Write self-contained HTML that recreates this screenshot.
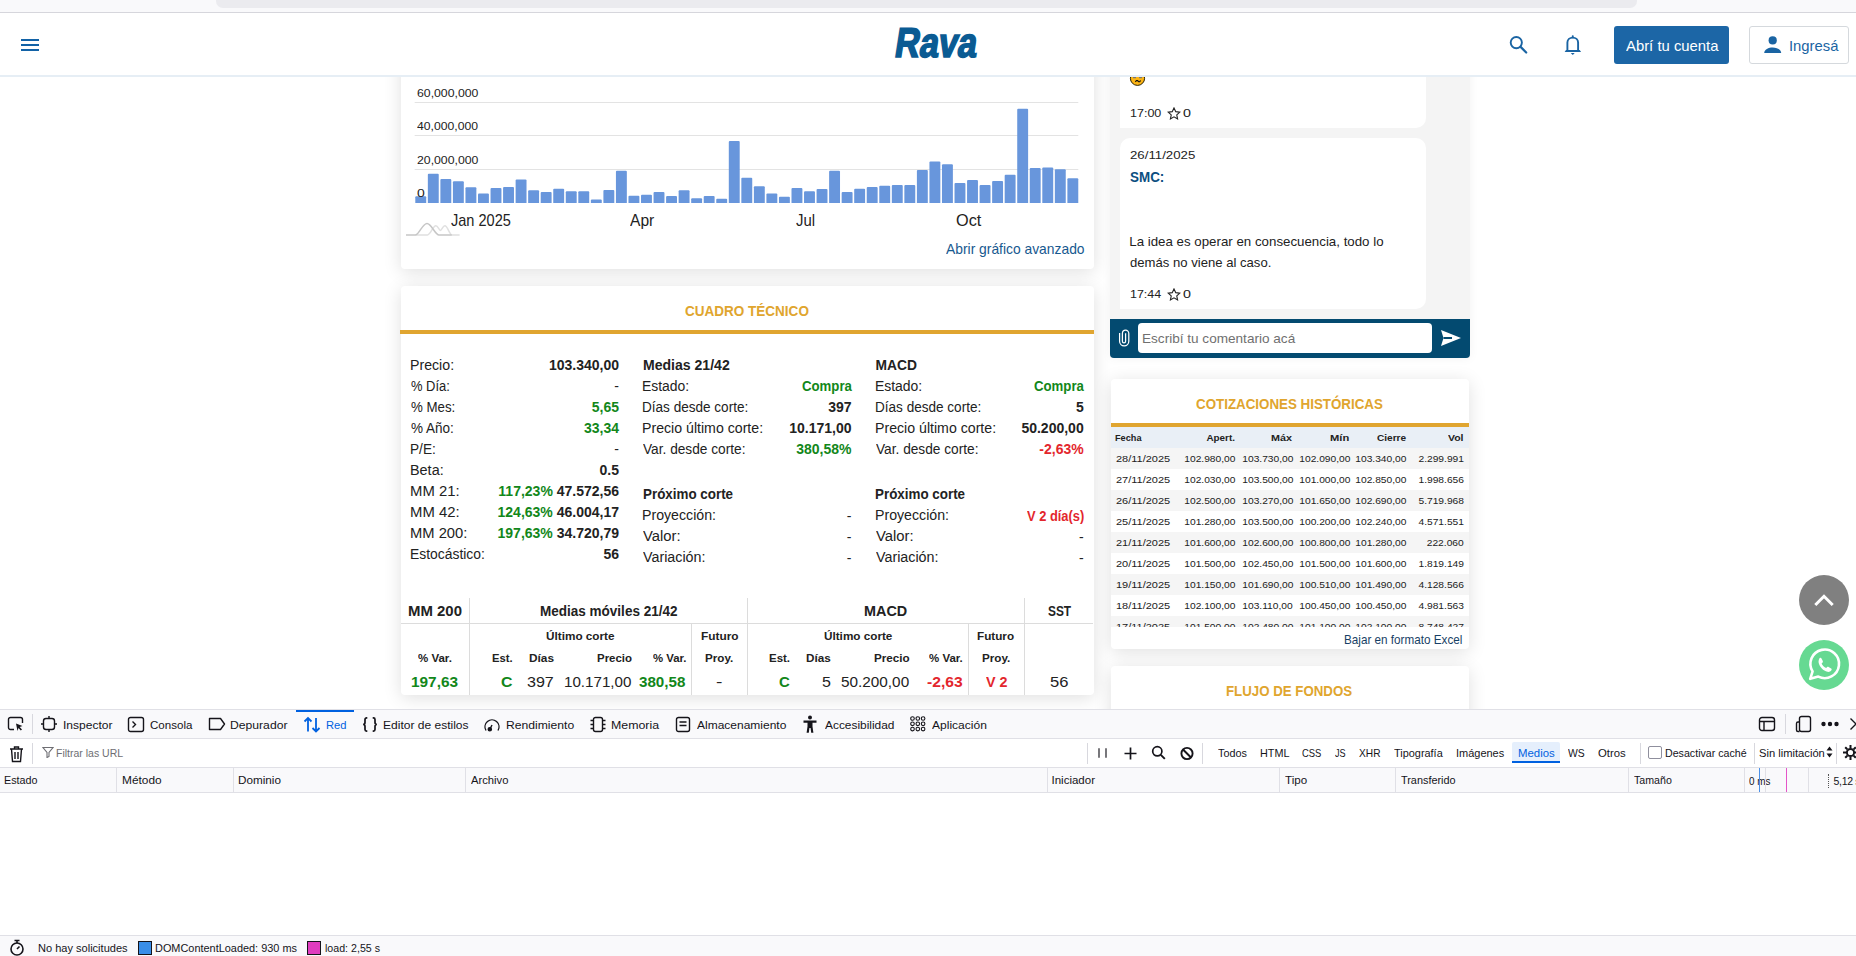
<!DOCTYPE html>
<html><head><meta charset="utf-8">
<style>
*{box-sizing:border-box;margin:0;padding:0}
html,body{width:1856px;height:956px;overflow:hidden;background:#fff;font-family:"Liberation Sans",sans-serif;color:#222}
.a{position:absolute;white-space:nowrap}
.r{text-align:right}
.c{text-align:center}
.b{font-weight:bold}
.g{color:#12871a}
.red{color:#e0282e}
#browser{position:absolute;left:0;top:0;width:1856px;height:13px;background:#f9f9fb;border-bottom:1px solid #d6d6dc}
#urlbar{position:absolute;left:216px;top:-6px;width:1421px;height:14px;background:#ebebef;border-radius:7px}
#hdr{position:absolute;left:0;top:13px;width:1856px;height:64px;background:#fff;border-bottom:2px solid #e6eef5;z-index:5}
.card{position:absolute;background:#fff;border-radius:4px;box-shadow:0 3px 18px rgba(0,0,0,0.125)}
.gold{color:#e0a22e}
#dev{position:absolute;left:0;top:709px;width:1856px;height:247px;background:#fff;border-top:1px solid #e0e0e6;font-size:12px;color:#15141a;z-index:10}
</style></head><body>
<div class="card" style="left:401px;top:-20px;width:693px;height:289px"></div>
<svg class="a" style="left:0;top:0" width="1100" height="280" viewBox="0 0 1100 280"><line x1="414.7" y1="102.5" x2="1078.3" y2="102.5" stroke="#e3e3e3" stroke-width="1"/><line x1="414.7" y1="135.5" x2="1078.3" y2="135.5" stroke="#e3e3e3" stroke-width="1"/><line x1="414.7" y1="169.5" x2="1078.3" y2="169.5" stroke="#e3e3e3" stroke-width="1"/><path d="M415.30 202.90 V197.14 Q415.30 196.14 416.30 196.14 H425.20 Q426.20 196.14 426.20 197.14 V202.90 Z" fill="#6896dc"/><path d="M427.84 202.90 V174.84 Q427.84 173.84 428.84 173.84 H437.74 Q438.74 173.84 438.74 174.84 V202.90 Z" fill="#6896dc"/><path d="M440.38 202.90 V179.99 Q440.38 178.99 441.38 178.99 H450.28 Q451.28 178.99 451.28 179.99 V202.90 Z" fill="#6896dc"/><path d="M452.92 202.90 V182.13 Q452.92 181.13 453.92 181.13 H462.82 Q463.82 181.13 463.82 182.13 V202.90 Z" fill="#6896dc"/><path d="M465.46 202.90 V188.14 Q465.46 187.14 466.46 187.14 H475.36 Q476.36 187.14 476.36 188.14 V202.90 Z" fill="#6896dc"/><path d="M478.00 202.90 V194.57 Q478.00 193.57 479.00 193.57 H487.90 Q488.90 193.57 488.90 194.57 V202.90 Z" fill="#6896dc"/><path d="M490.54 202.90 V188.99 Q490.54 187.99 491.54 187.99 H500.44 Q501.44 187.99 501.44 188.99 V202.90 Z" fill="#6896dc"/><path d="M503.08 202.90 V187.92 Q503.08 186.92 504.08 186.92 H512.98 Q513.98 186.92 513.98 187.92 V202.90 Z" fill="#6896dc"/><path d="M515.62 202.90 V180.42 Q515.62 179.42 516.62 179.42 H525.52 Q526.52 179.42 526.52 180.42 V202.90 Z" fill="#6896dc"/><path d="M528.16 202.90 V191.14 Q528.16 190.14 529.16 190.14 H538.06 Q539.06 190.14 539.06 191.14 V202.90 Z" fill="#6896dc"/><path d="M540.70 202.90 V193.07 Q540.70 192.07 541.70 192.07 H550.60 Q551.60 192.07 551.60 193.07 V202.90 Z" fill="#6896dc"/><path d="M553.24 202.90 V189.64 Q553.24 188.64 554.24 188.64 H563.14 Q564.14 188.64 564.14 189.64 V202.90 Z" fill="#6896dc"/><path d="M565.78 202.90 V192.21 Q565.78 191.21 566.78 191.21 H575.68 Q576.68 191.21 576.68 192.21 V202.90 Z" fill="#6896dc"/><path d="M578.32 202.90 V192.21 Q578.32 191.21 579.32 191.21 H588.22 Q589.22 191.21 589.22 192.21 V202.90 Z" fill="#6896dc"/><path d="M590.86 202.90 V200.57 Q590.86 199.57 591.86 199.57 H600.76 Q601.76 199.57 601.76 200.57 V202.90 Z" fill="#6896dc"/><path d="M603.40 202.90 V190.92 Q603.40 189.92 604.40 189.92 H613.30 Q614.30 189.92 614.30 190.92 V202.90 Z" fill="#6896dc"/><path d="M615.94 202.90 V171.84 Q615.94 170.84 616.94 170.84 H625.84 Q626.84 170.84 626.84 171.84 V202.90 Z" fill="#6896dc"/><path d="M628.48 202.90 V196.71 Q628.48 195.71 629.48 195.71 H638.38 Q639.38 195.71 639.38 196.71 V202.90 Z" fill="#6896dc"/><path d="M641.02 202.90 V195.64 Q641.02 194.64 642.02 194.64 H650.92 Q651.92 194.64 651.92 195.64 V202.90 Z" fill="#6896dc"/><path d="M653.56 202.90 V193.07 Q653.56 192.07 654.56 192.07 H663.46 Q664.46 192.07 664.46 193.07 V202.90 Z" fill="#6896dc"/><path d="M666.10 202.90 V196.93 Q666.10 195.93 667.10 195.93 H676.00 Q677.00 195.93 677.00 196.93 V202.90 Z" fill="#6896dc"/><path d="M678.64 202.90 V191.14 Q678.64 190.14 679.64 190.14 H688.54 Q689.54 190.14 689.54 191.14 V202.90 Z" fill="#6896dc"/><path d="M691.18 202.90 V199.28 Q691.18 198.28 692.18 198.28 H701.08 Q702.08 198.28 702.08 199.28 V202.90 Z" fill="#6896dc"/><path d="M703.72 202.90 V196.93 Q703.72 195.93 704.72 195.93 H713.62 Q714.62 195.93 714.62 196.93 V202.90 Z" fill="#6896dc"/><path d="M716.26 202.90 V199.71 Q716.26 198.71 717.26 198.71 H726.16 Q727.16 198.71 727.16 199.71 V202.90 Z" fill="#6896dc"/><path d="M728.80 202.90 V142.04 Q728.80 141.04 729.80 141.04 H738.70 Q739.70 141.04 739.70 142.04 V202.90 Z" fill="#6896dc"/><path d="M741.34 202.90 V178.70 Q741.34 177.70 742.34 177.70 H751.24 Q752.24 177.70 752.24 178.70 V202.90 Z" fill="#6896dc"/><path d="M753.88 202.90 V187.28 Q753.88 186.28 754.88 186.28 H763.78 Q764.78 186.28 764.78 187.28 V202.90 Z" fill="#6896dc"/><path d="M766.42 202.90 V194.57 Q766.42 193.57 767.42 193.57 H776.32 Q777.32 193.57 777.32 194.57 V202.90 Z" fill="#6896dc"/><path d="M778.96 202.90 V197.78 Q778.96 196.78 779.96 196.78 H788.86 Q789.86 196.78 789.86 197.78 V202.90 Z" fill="#6896dc"/><path d="M791.50 202.90 V188.99 Q791.50 187.99 792.50 187.99 H801.40 Q802.40 187.99 802.40 188.99 V202.90 Z" fill="#6896dc"/><path d="M804.04 202.90 V192.21 Q804.04 191.21 805.04 191.21 H813.94 Q814.94 191.21 814.94 192.21 V202.90 Z" fill="#6896dc"/><path d="M816.58 202.90 V190.07 Q816.58 189.07 817.58 189.07 H826.48 Q827.48 189.07 827.48 190.07 V202.90 Z" fill="#6896dc"/><path d="M829.12 202.90 V171.63 Q829.12 170.63 830.12 170.63 H839.02 Q840.02 170.63 840.02 171.63 V202.90 Z" fill="#6896dc"/><path d="M841.66 202.90 V193.07 Q841.66 192.07 842.66 192.07 H851.56 Q852.56 192.07 852.56 193.07 V202.90 Z" fill="#6896dc"/><path d="M854.20 202.90 V189.85 Q854.20 188.85 855.20 188.85 H864.10 Q865.10 188.85 865.10 189.85 V202.90 Z" fill="#6896dc"/><path d="M866.74 202.90 V187.92 Q866.74 186.92 867.74 186.92 H876.64 Q877.64 186.92 877.64 187.92 V202.90 Z" fill="#6896dc"/><path d="M879.28 202.90 V186.85 Q879.28 185.85 880.28 185.85 H889.18 Q890.18 185.85 890.18 186.85 V202.90 Z" fill="#6896dc"/><path d="M891.82 202.90 V185.99 Q891.82 184.99 892.82 184.99 H901.72 Q902.72 184.99 902.72 185.99 V202.90 Z" fill="#6896dc"/><path d="M904.36 202.90 V185.99 Q904.36 184.99 905.36 184.99 H914.26 Q915.26 184.99 915.26 185.99 V202.90 Z" fill="#6896dc"/><path d="M916.90 202.90 V170.98 Q916.90 169.98 917.90 169.98 H926.80 Q927.80 169.98 927.80 170.98 V202.90 Z" fill="#6896dc"/><path d="M929.44 202.90 V162.62 Q929.44 161.62 930.44 161.62 H939.34 Q940.34 161.62 940.34 162.62 V202.90 Z" fill="#6896dc"/><path d="M941.98 202.90 V165.19 Q941.98 164.19 942.98 164.19 H951.88 Q952.88 164.19 952.88 165.19 V202.90 Z" fill="#6896dc"/><path d="M954.52 202.90 V184.06 Q954.52 183.06 955.52 183.06 H964.42 Q965.42 183.06 965.42 184.06 V202.90 Z" fill="#6896dc"/><path d="M967.06 202.90 V181.06 Q967.06 180.06 968.06 180.06 H976.96 Q977.96 180.06 977.96 181.06 V202.90 Z" fill="#6896dc"/><path d="M979.60 202.90 V185.99 Q979.60 184.99 980.60 184.99 H989.50 Q990.50 184.99 990.50 185.99 V202.90 Z" fill="#6896dc"/><path d="M992.14 202.90 V181.92 Q992.14 180.92 993.14 180.92 H1002.04 Q1003.04 180.92 1003.04 181.92 V202.90 Z" fill="#6896dc"/><path d="M1004.68 202.90 V175.70 Q1004.68 174.70 1005.68 174.70 H1014.58 Q1015.58 174.70 1015.58 175.70 V202.90 Z" fill="#6896dc"/><path d="M1017.22 202.90 V109.66 Q1017.22 108.66 1018.22 108.66 H1027.12 Q1028.12 108.66 1028.12 109.66 V202.90 Z" fill="#6896dc"/><path d="M1029.76 202.90 V169.05 Q1029.76 168.05 1030.76 168.05 H1039.66 Q1040.66 168.05 1040.66 169.05 V202.90 Z" fill="#6896dc"/><path d="M1042.30 202.90 V168.62 Q1042.30 167.62 1043.30 167.62 H1052.20 Q1053.20 167.62 1053.20 168.62 V202.90 Z" fill="#6896dc"/><path d="M1054.84 202.90 V170.13 Q1054.84 169.13 1055.84 169.13 H1064.74 Q1065.74 169.13 1065.74 170.13 V202.90 Z" fill="#6896dc"/><path d="M1067.38 202.90 V179.13 Q1067.38 178.13 1068.38 178.13 H1077.28 Q1078.28 178.13 1078.28 179.13 V202.90 Z" fill="#6896dc"/><path d="M415.5 234.9 H427.5 C430.5 234.9 433 225.7 435.8 225.7 C438 225.7 439 230.4 440.4 230.4 C441.8 230.4 442.8 225.7 444.9 225.7 C447.5 225.7 449.5 234.9 452.1 234.9 H459.6" stroke="#e0e0e0" stroke-width="1.5" fill="none"/><path d="M406 234.9 H415.5 C419 234.9 422.5 223.4 427 223.4 C431.5 223.4 435 234.9 438.9 234.9 H451.7" stroke="#c6c6c6" stroke-width="1.5" fill="none"/></svg>
<div class="a" style="left:416.53px;top:86.78px;font:normal normal 11.4px/13.11px 'Liberation Sans',sans-serif;color:#222;transform:scaleX(1.0768);transform-origin:0 0;">60,000,000</div>
<div class="a" style="left:416.93px;top:119.98px;font:normal normal 11.4px/13.11px 'Liberation Sans',sans-serif;color:#222;transform:scaleX(1.0696);transform-origin:0 0;">40,000,000</div>
<div class="a" style="left:416.53px;top:153.68px;font:normal normal 11.4px/13.11px 'Liberation Sans',sans-serif;color:#222;transform:scaleX(1.0768);transform-origin:0 0;">20,000,000</div>
<div class="a" style="left:416.61px;top:186.92px;font:normal normal 10.8px/12.42px 'Liberation Sans',sans-serif;color:#222;transform:scaleX(1.2952);transform-origin:0 0;">0</div>
<div class="a" style="left:450.77px;top:211.80px;font:normal normal 15.9px/18.29px 'Liberation Sans',sans-serif;color:#222;transform:scaleX(0.9147);transform-origin:0 0;">Jan 2025</div>
<div class="a" style="left:629.70px;top:211.80px;font:normal normal 15.9px/18.29px 'Liberation Sans',sans-serif;color:#222;transform:scaleX(0.9796);transform-origin:0 0;">Apr</div>
<div class="a" style="left:795.97px;top:211.80px;font:normal normal 15.9px/18.29px 'Liberation Sans',sans-serif;color:#222;transform:scaleX(0.9368);transform-origin:0 0;">Jul</div>
<div class="a" style="left:956.43px;top:211.80px;font:normal normal 15.9px/18.29px 'Liberation Sans',sans-serif;color:#222;transform:scaleX(1.0220);transform-origin:0 0;">Oct</div>
<div class="a" style="left:946.00px;top:240.87px;font:normal normal 14.5px/16.67px 'Liberation Sans',sans-serif;color:#17598f;transform:scaleX(0.9550);transform-origin:0 0;">Abrir gráfico avanzado</div>
<div class="card" style="left:401px;top:286px;width:693px;height:409px"></div>
<div class="a" style="left:684.90px;top:303.04px;font:normal bold 14.2px/16.33px 'Liberation Sans',sans-serif;color:#e0a52e;transform:scaleX(0.9527);transform-origin:0 0;">CUADRO TÉCNICO</div>
<div class="a" style="left:400px;top:330px;width:694px;height:4px;background:#e0a530"></div>
<div class="a" style="left:410.05px;top:357.50px;font:normal normal 13.8px/15.87px 'Liberation Sans',sans-serif;color:#222;transform:scaleX(1.0265);transform-origin:0 0;">Precio:</div>
<div class="a" style="right:1237px;top:357.32px;font:bold 14px/16.1px 'Liberation Sans',sans-serif;color:#222;text-align:right;">103.340,00</div>
<div class="a" style="left:410.73px;top:378.50px;font:normal normal 13.8px/15.87px 'Liberation Sans',sans-serif;color:#222;transform:scaleX(0.9384);transform-origin:0 0;">% Día:</div>
<div class="a" style="right:1237px;top:378.32px;font:normal 14px/16.1px 'Liberation Sans',sans-serif;color:#222;text-align:right;">-</div>
<div class="a" style="left:410.72px;top:399.50px;font:normal normal 13.8px/15.87px 'Liberation Sans',sans-serif;color:#222;transform:scaleX(0.9627);transform-origin:0 0;">% Mes:</div>
<div class="a" style="right:1237px;top:399.32px;font:bold 14px/16.1px 'Liberation Sans',sans-serif;color:#12871a;text-align:right;">5,65</div>
<div class="a" style="left:410.71px;top:420.50px;font:normal normal 13.8px/15.87px 'Liberation Sans',sans-serif;color:#222;transform:scaleX(0.9786);transform-origin:0 0;">% Año:</div>
<div class="a" style="right:1237px;top:420.32px;font:bold 14px/16.1px 'Liberation Sans',sans-serif;color:#12871a;text-align:right;">33,34</div>
<div class="a" style="left:410.09px;top:441.50px;font:normal normal 13.8px/15.87px 'Liberation Sans',sans-serif;color:#222;transform:scaleX(0.9895);transform-origin:0 0;">P/E:</div>
<div class="a" style="right:1237px;top:441.32px;font:normal 14px/16.1px 'Liberation Sans',sans-serif;color:#222;text-align:right;">-</div>
<div class="a" style="left:410.03px;top:462.50px;font:normal normal 13.8px/15.87px 'Liberation Sans',sans-serif;color:#222;transform:scaleX(1.0444);transform-origin:0 0;">Beta:</div>
<div class="a" style="right:1237px;top:462.32px;font:bold 14px/16.1px 'Liberation Sans',sans-serif;color:#222;text-align:right;">0.5</div>
<div class="a" style="left:409.99px;top:483.50px;font:normal normal 13.8px/15.87px 'Liberation Sans',sans-serif;color:#222;transform:scaleX(1.0774);transform-origin:0 0;">MM 21:</div>
<div class="a" style="right:1237px;top:483.32px;font:bold 14px/16.1px 'Liberation Sans',sans-serif;color:#222;text-align:right;"><span style="color:#12871a">117,23%</span> 47.572,56</div>
<div class="a" style="left:409.99px;top:504.50px;font:normal normal 13.8px/15.87px 'Liberation Sans',sans-serif;color:#222;transform:scaleX(1.0774);transform-origin:0 0;">MM 42:</div>
<div class="a" style="right:1237px;top:504.32px;font:bold 14px/16.1px 'Liberation Sans',sans-serif;color:#222;text-align:right;"><span style="color:#12871a">124,63%</span> 46.004,17</div>
<div class="a" style="left:410.00px;top:525.50px;font:normal normal 13.8px/15.87px 'Liberation Sans',sans-serif;color:#222;transform:scaleX(1.0686);transform-origin:0 0;">MM 200:</div>
<div class="a" style="right:1237px;top:525.32px;font:bold 14px/16.1px 'Liberation Sans',sans-serif;color:#222;text-align:right;"><span style="color:#12871a">197,63%</span> 34.720,79</div>
<div class="a" style="left:410.07px;top:546.50px;font:normal normal 13.8px/15.87px 'Liberation Sans',sans-serif;color:#222;transform:scaleX(1.0069);transform-origin:0 0;">Estocástico:</div>
<div class="a" style="right:1237px;top:546.32px;font:bold 14px/16.1px 'Liberation Sans',sans-serif;color:#222;text-align:right;">56</div>
<div class="a" style="left:642.71px;top:357.50px;font:normal bold 13.8px/15.87px 'Liberation Sans',sans-serif;color:#222;transform:scaleX(1.0185);transform-origin:0 0;">Medias 21/42</div>
<div class="a" style="left:642.46px;top:378.50px;font:normal normal 13.8px/15.87px 'Liberation Sans',sans-serif;color:#222;transform:scaleX(1.0090);transform-origin:0 0;">Estado:</div>
<div class="a" style="left:801.51px;top:378.32px;font:normal bold 14px/16.1px 'Liberation Sans',sans-serif;color:#12871a;transform:scaleX(0.9432);transform-origin:0 0;">Compra</div>
<div class="a" style="left:642.49px;top:399.50px;font:normal normal 13.8px/15.87px 'Liberation Sans',sans-serif;color:#222;transform:scaleX(0.9823);transform-origin:0 0;">Días desde corte:</div>
<div class="a" style="right:1004.5px;top:399.32px;font:bold 14px/16.1px 'Liberation Sans',sans-serif;color:#222;text-align:right;">397</div>
<div class="a" style="left:642.45px;top:420.50px;font:normal normal 13.8px/15.87px 'Liberation Sans',sans-serif;color:#222;transform:scaleX(1.0255);transform-origin:0 0;">Precio último corte:</div>
<div class="a" style="right:1004.5px;top:420.32px;font:bold 14px/16.1px 'Liberation Sans',sans-serif;color:#222;text-align:right;">10.171,00</div>
<div class="a" style="left:643.48px;top:441.50px;font:normal normal 13.8px/15.87px 'Liberation Sans',sans-serif;color:#222;transform:scaleX(0.9922);transform-origin:0 0;">Var. desde corte:</div>
<div class="a" style="right:1004.5px;top:441.32px;font:bold 14px/16.1px 'Liberation Sans',sans-serif;color:#12871a;text-align:right;">380,58%</div>
<div class="a" style="left:642.75px;top:486.90px;font:normal bold 13.8px/15.87px 'Liberation Sans',sans-serif;color:#222;transform:scaleX(0.9707);transform-origin:0 0;">Próximo corte</div>
<div class="a" style="left:642.45px;top:508.00px;font:normal normal 13.8px/15.87px 'Liberation Sans',sans-serif;color:#222;transform:scaleX(1.0265);transform-origin:0 0;">Proyección:</div>
<div class="a" style="right:1004.5px;top:507.82px;font:normal 14px/16.1px 'Liberation Sans',sans-serif;color:#222;text-align:right;">-</div>
<div class="a" style="left:643.47px;top:529.00px;font:normal normal 13.8px/15.87px 'Liberation Sans',sans-serif;color:#222;transform:scaleX(1.0726);transform-origin:0 0;">Valor:</div>
<div class="a" style="right:1004.5px;top:528.82px;font:normal 14px/16.1px 'Liberation Sans',sans-serif;color:#222;text-align:right;">-</div>
<div class="a" style="left:643.47px;top:550.00px;font:normal normal 13.8px/15.87px 'Liberation Sans',sans-serif;color:#222;transform:scaleX(1.0356);transform-origin:0 0;">Variación:</div>
<div class="a" style="right:1004.5px;top:549.82px;font:normal 14px/16.1px 'Liberation Sans',sans-serif;color:#222;text-align:right;">-</div>
<div class="a" style="left:875.6px;top:357.50px;font:bold 13.8px/15.87px 'Liberation Sans',sans-serif;color:#222;">MACD</div>
<div class="a" style="left:875.06px;top:378.50px;font:normal normal 13.8px/15.87px 'Liberation Sans',sans-serif;color:#222;transform:scaleX(1.0090);transform-origin:0 0;">Estado:</div>
<div class="a" style="left:1033.71px;top:378.32px;font:normal bold 14px/16.1px 'Liberation Sans',sans-serif;color:#12871a;transform:scaleX(0.9432);transform-origin:0 0;">Compra</div>
<div class="a" style="left:875.09px;top:399.50px;font:normal normal 13.8px/15.87px 'Liberation Sans',sans-serif;color:#222;transform:scaleX(0.9823);transform-origin:0 0;">Días desde corte:</div>
<div class="a" style="right:772.3px;top:399.32px;font:bold 14px/16.1px 'Liberation Sans',sans-serif;color:#222;text-align:right;">5</div>
<div class="a" style="left:875.05px;top:420.50px;font:normal normal 13.8px/15.87px 'Liberation Sans',sans-serif;color:#222;transform:scaleX(1.0255);transform-origin:0 0;">Precio último corte:</div>
<div class="a" style="right:772.3px;top:420.32px;font:bold 14px/16.1px 'Liberation Sans',sans-serif;color:#222;text-align:right;">50.200,00</div>
<div class="a" style="left:876.08px;top:441.50px;font:normal normal 13.8px/15.87px 'Liberation Sans',sans-serif;color:#222;transform:scaleX(0.9922);transform-origin:0 0;">Var. desde corte:</div>
<div class="a" style="right:772.3px;top:441.32px;font:bold 14px/16.1px 'Liberation Sans',sans-serif;color:#e3262d;text-align:right;">-2,63%</div>
<div class="a" style="left:875.35px;top:486.90px;font:normal bold 13.8px/15.87px 'Liberation Sans',sans-serif;color:#222;transform:scaleX(0.9707);transform-origin:0 0;">Próximo corte</div>
<div class="a" style="left:875.05px;top:508.00px;font:normal normal 13.8px/15.87px 'Liberation Sans',sans-serif;color:#222;transform:scaleX(1.0265);transform-origin:0 0;">Proyección:</div>
<div class="a" style="left:1027.09px;top:507.82px;font:normal bold 14px/16.1px 'Liberation Sans',sans-serif;color:#e3262d;transform:scaleX(0.9187);transform-origin:0 0;">V 2 día(s)</div>
<div class="a" style="left:876.07px;top:529.00px;font:normal normal 13.8px/15.87px 'Liberation Sans',sans-serif;color:#222;transform:scaleX(1.0726);transform-origin:0 0;">Valor:</div>
<div class="a" style="right:772.3px;top:528.82px;font:normal 14px/16.1px 'Liberation Sans',sans-serif;color:#222;text-align:right;">-</div>
<div class="a" style="left:876.07px;top:550.00px;font:normal normal 13.8px/15.87px 'Liberation Sans',sans-serif;color:#222;transform:scaleX(1.0356);transform-origin:0 0;">Variación:</div>
<div class="a" style="right:772.3px;top:549.82px;font:normal 14px/16.1px 'Liberation Sans',sans-serif;color:#222;text-align:right;">-</div>
<div class="a" style="left:469px;top:598px;width:1px;height:97px;background:#dcdcdc"></div>
<div class="a" style="left:747px;top:598px;width:1px;height:97px;background:#dcdcdc"></div>
<div class="a" style="left:1024px;top:598px;width:1px;height:97px;background:#dcdcdc"></div>
<div class="a" style="left:691px;top:623px;width:1px;height:72px;background:#dcdcdc"></div>
<div class="a" style="left:968px;top:623px;width:1px;height:72px;background:#dcdcdc"></div>
<div class="a" style="left:401px;top:623px;width:692px;height:1px;background:#dcdcdc"></div>
<div class="a" style="left:407.66px;top:603.32px;font:normal bold 13.9px/15.98px 'Liberation Sans',sans-serif;color:#222;transform:scaleX(1.0749);transform-origin:0 0;">MM 200</div>
<div class="a" style="left:539.65px;top:603.32px;font:normal bold 13.9px/15.98px 'Liberation Sans',sans-serif;color:#222;transform:scaleX(0.9730);transform-origin:0 0;">Medias móviles 21/42</div>
<div class="a" style="left:864.19px;top:603.32px;font:normal bold 13.9px/15.98px 'Liberation Sans',sans-serif;color:#222;transform:scaleX(1.0360);transform-origin:0 0;">MACD</div>
<div class="a" style="left:1047.68px;top:603.32px;font:normal bold 13.9px/15.98px 'Liberation Sans',sans-serif;color:#222;transform:scaleX(0.8566);transform-origin:0 0;">SST</div>
<div class="a" style="left:546.02px;top:630.02px;font:normal bold 10.8px/12.42px 'Liberation Sans',sans-serif;color:#222;transform:scaleX(1.0887);transform-origin:0 0;">Último corte</div>
<div class="a" style="left:700.57px;top:630.02px;font:normal bold 10.8px/12.42px 'Liberation Sans',sans-serif;color:#222;transform:scaleX(1.1000);transform-origin:0 0;">Futuro</div>
<div class="a" style="left:823.72px;top:630.02px;font:normal bold 10.8px/12.42px 'Liberation Sans',sans-serif;color:#222;transform:scaleX(1.0855);transform-origin:0 0;">Último corte</div>
<div class="a" style="left:977.39px;top:630.02px;font:normal bold 10.8px/12.42px 'Liberation Sans',sans-serif;color:#222;transform:scaleX(1.0848);transform-origin:0 0;">Futuro</div>
<div class="a" style="left:418.03px;top:651.82px;font:normal bold 10.8px/12.42px 'Liberation Sans',sans-serif;color:#222;transform:scaleX(1.0656);transform-origin:0 0;">% Var.</div>
<div class="a" style="left:491.62px;top:651.82px;font:normal bold 10.8px/12.42px 'Liberation Sans',sans-serif;color:#222;transform:scaleX(1.0411);transform-origin:0 0;">Est.</div>
<div class="a" style="left:528.58px;top:651.82px;font:normal bold 10.8px/12.42px 'Liberation Sans',sans-serif;color:#222;transform:scaleX(1.0977);transform-origin:0 0;">Días</div>
<div class="a" style="left:596.50px;top:651.82px;font:normal bold 10.8px/12.42px 'Liberation Sans',sans-serif;color:#222;transform:scaleX(1.0614);transform-origin:0 0;">Precio</div>
<div class="a" style="left:652.74px;top:651.82px;font:normal bold 10.8px/12.42px 'Liberation Sans',sans-serif;color:#222;transform:scaleX(1.0526);transform-origin:0 0;">% Var.</div>
<div class="a" style="left:705.49px;top:651.82px;font:normal bold 10.8px/12.42px 'Liberation Sans',sans-serif;color:#222;transform:scaleX(1.0788);transform-origin:0 0;">Proy.</div>
<div class="a" style="left:769.30px;top:651.82px;font:normal bold 10.8px/12.42px 'Liberation Sans',sans-serif;color:#222;transform:scaleX(1.0630);transform-origin:0 0;">Est.</div>
<div class="a" style="left:806.49px;top:651.82px;font:normal bold 10.8px/12.42px 'Liberation Sans',sans-serif;color:#222;transform:scaleX(1.0837);transform-origin:0 0;">Días</div>
<div class="a" style="left:873.59px;top:651.82px;font:normal bold 10.8px/12.42px 'Liberation Sans',sans-serif;color:#222;transform:scaleX(1.0803);transform-origin:0 0;">Precio</div>
<div class="a" style="left:929.43px;top:651.82px;font:normal bold 10.8px/12.42px 'Liberation Sans',sans-serif;color:#222;transform:scaleX(1.0623);transform-origin:0 0;">% Var.</div>
<div class="a" style="left:981.99px;top:651.82px;font:normal bold 10.8px/12.42px 'Liberation Sans',sans-serif;color:#222;transform:scaleX(1.0828);transform-origin:0 0;">Proy.</div>
<div class="a" style="left:411.40px;top:673.42px;font:normal bold 15px/17.25px 'Liberation Sans',sans-serif;color:#12871a;transform:scaleX(1.0254);transform-origin:0 0;">197,63</div>
<div class="a" style="left:500.64px;top:673.42px;font:normal bold 15px/17.25px 'Liberation Sans',sans-serif;color:#12871a;transform:scaleX(1.0564);transform-origin:0 0;">C</div>
<div class="a" style="left:526.73px;top:673.42px;font:normal normal 15px/17.25px 'Liberation Sans',sans-serif;color:#222;transform:scaleX(1.0709);transform-origin:0 0;">397</div>
<div class="a" style="left:564.16px;top:673.42px;font:normal normal 15px/17.25px 'Liberation Sans',sans-serif;color:#222;transform:scaleX(1.0108);transform-origin:0 0;">10.171,00</div>
<div class="a" style="left:639.42px;top:673.42px;font:normal bold 15px/17.25px 'Liberation Sans',sans-serif;color:#12871a;transform:scaleX(1.0111);transform-origin:0 0;">380,58</div>
<div class="a" style="left:716.20px;top:673.42px;font:normal normal 15px/17.25px 'Liberation Sans',sans-serif;color:#222;transform:scaleX(1.2800);transform-origin:0 0;">-</div>
<div class="a" style="left:779.18px;top:673.42px;font:normal bold 15px/17.25px 'Liberation Sans',sans-serif;color:#12871a;transform:scaleX(0.9949);transform-origin:0 0;">C</div>
<div class="a" style="left:822.33px;top:673.42px;font:normal normal 15px/17.25px 'Liberation Sans',sans-serif;color:#222;transform:scaleX(1.0667);transform-origin:0 0;">5</div>
<div class="a" style="left:841.16px;top:673.42px;font:normal normal 15px/17.25px 'Liberation Sans',sans-serif;color:#222;transform:scaleX(1.0214);transform-origin:0 0;">50.200,00</div>
<div class="a" style="left:927.45px;top:673.42px;font:normal bold 15px/17.25px 'Liberation Sans',sans-serif;color:#e3262d;transform:scaleX(1.0424);transform-origin:0 0;">-2,63</div>
<div class="a" style="left:985.78px;top:673.42px;font:normal bold 15px/17.25px 'Liberation Sans',sans-serif;color:#e3262d;transform:scaleX(0.9563);transform-origin:0 0;">V 2</div>
<div class="a" style="left:1050.01px;top:673.42px;font:normal normal 15px/17.25px 'Liberation Sans',sans-serif;color:#222;transform:scaleX(1.1032);transform-origin:0 0;">56</div>
<div class="a" style="left:1110px;top:0px;width:360px;height:358px;background:#f4f4f4;box-shadow:0 0 10px rgba(0,0,0,0.05)"></div>
<div class="a" style="left:1120px;top:-20px;width:306px;height:148px;background:#fff;border-radius:10px 10px 10px 0"></div>
<div class="a" style="left:1120px;top:138px;width:306px;height:170.5px;background:#fff;border-radius:10px 10px 10px 0"></div>
<svg class="a" style="left:1128px;top:69px" width="20" height="20" viewBox="1128 69 20 20"><circle cx="1137.5" cy="78.3" r="7.1" fill="#fcb414" stroke="#2a2000" stroke-width="1"/><rect x="1133" y="77" width="3" height="1.2" fill="#777"/><rect x="1139" y="77" width="3" height="1.2" fill="#777"/><path d="M1135.3 81.8 L1136.4 80.6 H1137.6 L1138.6 81.7 H1139.7 L1140.7 80.5" stroke="#111" stroke-width="1.1" fill="none"/></svg>
<div class="a" style="left:1129.54px;top:107.48px;font:normal normal 11.4px/13.11px 'Liberation Sans',sans-serif;color:#222;transform:scaleX(1.0986);transform-origin:0 0;">17:00</div>
<svg class="a" style="left:1166.5px;top:107.0px" width="14" height="13" viewBox="0 0 14 13"><path d="M7 0.9l1.75 3.75 4.05.45-3.05 2.75.85 4.05L7 9.85 3.4 11.9l.85-4.05L1.2 5.1l4.05-.45z" fill="none" stroke="#222" stroke-width="1.1" stroke-linejoin="miter"/></svg>
<div class="a" style="left:1182.53px;top:107.48px;font:normal normal 11.4px/13.11px 'Liberation Sans',sans-serif;color:#222;transform:scaleX(1.2545);transform-origin:0 0;">0</div>
<div class="a" style="left:1129.54px;top:288.48px;font:normal normal 11.4px/13.11px 'Liberation Sans',sans-serif;color:#222;transform:scaleX(1.0936);transform-origin:0 0;">17:44</div>
<svg class="a" style="left:1166.5px;top:288.0px" width="14" height="13" viewBox="0 0 14 13"><path d="M7 0.9l1.75 3.75 4.05.45-3.05 2.75.85 4.05L7 9.85 3.4 11.9l.85-4.05L1.2 5.1l4.05-.45z" fill="none" stroke="#222" stroke-width="1.1" stroke-linejoin="miter"/></svg>
<div class="a" style="left:1182.53px;top:288.48px;font:normal normal 11.4px/13.11px 'Liberation Sans',sans-serif;color:#222;transform:scaleX(1.2545);transform-origin:0 0;">0</div>
<div class="a" style="left:1129.51px;top:148.67px;font:normal normal 11.3px/12.99px 'Liberation Sans',sans-serif;color:#222;transform:scaleX(1.1716);transform-origin:0 0;">26/11/2025</div>
<div class="a" style="left:1130.14px;top:170.20px;font:normal bold 13.8px/15.87px 'Liberation Sans',sans-serif;color:#0b4e80;transform:scaleX(0.9731);transform-origin:0 0;">SMC:</div>
<div class="a" style="left:1129.27px;top:234.26px;font:normal normal 13.3px/15.29px 'Liberation Sans',sans-serif;color:#222;">La idea es operar en consecuencia, todo lo</div>
<div class="a" style="left:1129.91px;top:254.96px;font:normal normal 13.3px/15.29px 'Liberation Sans',sans-serif;color:#222;transform:scaleX(0.9855);transform-origin:0 0;">demás no viene al caso.</div>
<div class="a" style="left:1110px;top:319px;width:360px;height:39px;background:#034a70;border-radius:0 0 4px 4px"></div>
<div class="a" style="left:1138px;top:323px;width:294px;height:29.5px;background:#fff;border-radius:4px"></div>
<div class="a" style="left:1142.37px;top:330.58px;font:normal normal 13.5px/15.52px 'Liberation Sans',sans-serif;color:#707070;transform:scaleX(1.0058);transform-origin:0 0;">Escribí tu comentario acá</div>
<svg class="a" style="left:1108px;top:315px" width="40" height="45" viewBox="1108 315 40 45"><path d="M1119.6 333 V341.3 A4.6 4.6 0 0 0 1128.8 341.3 V333.4 A3.2 3.2 0 0 0 1122.4 333.4 V341.2 A1.6 1.6 0 0 0 1125.6 341.2 V333.2" fill="none" stroke="#fff" stroke-width="1.25"/></svg>
<svg class="a" style="left:1440px;top:329px" width="22" height="18" viewBox="0 0 22 18"><path d="M1 1 L21 9 L1 17 L3.5 9z" fill="#fff"/><path d="M3.5 9 H12" stroke="#034a70" stroke-width="2"/></svg>
<div class="card" style="left:1111px;top:379px;width:358px;height:270px"></div>
<div class="a" style="left:1196.11px;top:395.54px;font:normal bold 14.2px/16.33px 'Liberation Sans',sans-serif;color:#e0a52e;transform:scaleX(0.9406);transform-origin:0 0;">COTIZACIONES HISTÓRICAS</div>
<div class="a" style="left:1111px;top:423px;width:358px;height:4px;background:#e0a530"></div>
<div class="a" style="left:1111px;top:427px;width:358px;height:21px;background:#e9eff6"></div>
<div class="a" style="left:1115.42px;top:432.24px;font:normal bold 9.9px/11.38px 'Liberation Sans',sans-serif;color:#222;transform:scaleX(0.9280);transform-origin:0 0;">Fecha</div>
<div class="a" style="left:1206.45px;top:432.24px;font:normal bold 9.9px/11.38px 'Liberation Sans',sans-serif;color:#222;">Apert.</div>
<div class="a" style="left:1271.12px;top:432.24px;font:normal bold 9.9px/11.38px 'Liberation Sans',sans-serif;color:#222;transform:scaleX(1.0919);transform-origin:0 0;">Máx</div>
<div class="a" style="left:1330.49px;top:432.24px;font:normal bold 9.9px/11.38px 'Liberation Sans',sans-serif;color:#222;transform:scaleX(1.1302);transform-origin:0 0;">Mín</div>
<div class="a" style="left:1377.02px;top:432.24px;font:normal bold 9.9px/11.38px 'Liberation Sans',sans-serif;color:#222;transform:scaleX(1.0188);transform-origin:0 0;">Cierre</div>
<div class="a" style="left:1448.37px;top:432.24px;font:normal bold 9.9px/11.38px 'Liberation Sans',sans-serif;color:#222;transform:scaleX(1.0618);transform-origin:0 0;">Vol</div>
<div class="a" style="left:1111px;top:448px;width:358px;height:179px;overflow:hidden"><div style="position:absolute;left:0;top:0px;width:358px;height:21px;background:#f5f5f5"></div><div class="a" style="left:4.60px;top:4.83px;font:normal 9.9px/12px 'Liberation Sans',sans-serif;color:#222;transform:scaleX(1.113);transform-origin:0 0">28/11/2025</div><div class="a" style="right:233.60px;top:4.83px;font:normal 9.9px/12px 'Liberation Sans',sans-serif;color:#222;text-align:right;transform:scaleX(1.035);transform-origin:100% 0">102.980,00</div><div class="a" style="right:176.00px;top:4.83px;font:normal 9.9px/12px 'Liberation Sans',sans-serif;color:#222;text-align:right;transform:scaleX(1.035);transform-origin:100% 0">103.730,00</div><div class="a" style="right:119.00px;top:4.83px;font:normal 9.9px/12px 'Liberation Sans',sans-serif;color:#222;text-align:right;transform:scaleX(1.035);transform-origin:100% 0">102.090,00</div><div class="a" style="right:62.20px;top:4.83px;font:normal 9.9px/12px 'Liberation Sans',sans-serif;color:#222;text-align:right;transform:scaleX(1.035);transform-origin:100% 0">103.340,00</div><div class="a" style="right:4.90px;top:4.83px;font:normal 9.9px/12px 'Liberation Sans',sans-serif;color:#222;text-align:right;transform:scaleX(1.035);transform-origin:100% 0">2.299.991</div><div style="position:absolute;left:0;top:21px;width:358px;height:21px;background:#fff"></div><div class="a" style="left:4.60px;top:25.83px;font:normal 9.9px/12px 'Liberation Sans',sans-serif;color:#222;transform:scaleX(1.113);transform-origin:0 0">27/11/2025</div><div class="a" style="right:233.60px;top:25.83px;font:normal 9.9px/12px 'Liberation Sans',sans-serif;color:#222;text-align:right;transform:scaleX(1.035);transform-origin:100% 0">102.030,00</div><div class="a" style="right:176.00px;top:25.83px;font:normal 9.9px/12px 'Liberation Sans',sans-serif;color:#222;text-align:right;transform:scaleX(1.035);transform-origin:100% 0">103.500,00</div><div class="a" style="right:119.00px;top:25.83px;font:normal 9.9px/12px 'Liberation Sans',sans-serif;color:#222;text-align:right;transform:scaleX(1.035);transform-origin:100% 0">101.000,00</div><div class="a" style="right:62.20px;top:25.83px;font:normal 9.9px/12px 'Liberation Sans',sans-serif;color:#222;text-align:right;transform:scaleX(1.035);transform-origin:100% 0">102.850,00</div><div class="a" style="right:4.90px;top:25.83px;font:normal 9.9px/12px 'Liberation Sans',sans-serif;color:#222;text-align:right;transform:scaleX(1.035);transform-origin:100% 0">1.998.656</div><div style="position:absolute;left:0;top:42px;width:358px;height:21px;background:#f5f5f5"></div><div class="a" style="left:4.60px;top:46.83px;font:normal 9.9px/12px 'Liberation Sans',sans-serif;color:#222;transform:scaleX(1.113);transform-origin:0 0">26/11/2025</div><div class="a" style="right:233.60px;top:46.83px;font:normal 9.9px/12px 'Liberation Sans',sans-serif;color:#222;text-align:right;transform:scaleX(1.035);transform-origin:100% 0">102.500,00</div><div class="a" style="right:176.00px;top:46.83px;font:normal 9.9px/12px 'Liberation Sans',sans-serif;color:#222;text-align:right;transform:scaleX(1.035);transform-origin:100% 0">103.270,00</div><div class="a" style="right:119.00px;top:46.83px;font:normal 9.9px/12px 'Liberation Sans',sans-serif;color:#222;text-align:right;transform:scaleX(1.035);transform-origin:100% 0">101.650,00</div><div class="a" style="right:62.20px;top:46.83px;font:normal 9.9px/12px 'Liberation Sans',sans-serif;color:#222;text-align:right;transform:scaleX(1.035);transform-origin:100% 0">102.690,00</div><div class="a" style="right:4.90px;top:46.83px;font:normal 9.9px/12px 'Liberation Sans',sans-serif;color:#222;text-align:right;transform:scaleX(1.035);transform-origin:100% 0">5.719.968</div><div style="position:absolute;left:0;top:63px;width:358px;height:21px;background:#fff"></div><div class="a" style="left:4.60px;top:67.83px;font:normal 9.9px/12px 'Liberation Sans',sans-serif;color:#222;transform:scaleX(1.113);transform-origin:0 0">25/11/2025</div><div class="a" style="right:233.60px;top:67.83px;font:normal 9.9px/12px 'Liberation Sans',sans-serif;color:#222;text-align:right;transform:scaleX(1.035);transform-origin:100% 0">101.280,00</div><div class="a" style="right:176.00px;top:67.83px;font:normal 9.9px/12px 'Liberation Sans',sans-serif;color:#222;text-align:right;transform:scaleX(1.035);transform-origin:100% 0">103.500,00</div><div class="a" style="right:119.00px;top:67.83px;font:normal 9.9px/12px 'Liberation Sans',sans-serif;color:#222;text-align:right;transform:scaleX(1.035);transform-origin:100% 0">100.200,00</div><div class="a" style="right:62.20px;top:67.83px;font:normal 9.9px/12px 'Liberation Sans',sans-serif;color:#222;text-align:right;transform:scaleX(1.035);transform-origin:100% 0">102.240,00</div><div class="a" style="right:4.90px;top:67.83px;font:normal 9.9px/12px 'Liberation Sans',sans-serif;color:#222;text-align:right;transform:scaleX(1.035);transform-origin:100% 0">4.571.551</div><div style="position:absolute;left:0;top:84px;width:358px;height:21px;background:#f5f5f5"></div><div class="a" style="left:4.60px;top:88.83px;font:normal 9.9px/12px 'Liberation Sans',sans-serif;color:#222;transform:scaleX(1.113);transform-origin:0 0">21/11/2025</div><div class="a" style="right:233.60px;top:88.83px;font:normal 9.9px/12px 'Liberation Sans',sans-serif;color:#222;text-align:right;transform:scaleX(1.035);transform-origin:100% 0">101.600,00</div><div class="a" style="right:176.00px;top:88.83px;font:normal 9.9px/12px 'Liberation Sans',sans-serif;color:#222;text-align:right;transform:scaleX(1.035);transform-origin:100% 0">102.600,00</div><div class="a" style="right:119.00px;top:88.83px;font:normal 9.9px/12px 'Liberation Sans',sans-serif;color:#222;text-align:right;transform:scaleX(1.035);transform-origin:100% 0">100.800,00</div><div class="a" style="right:62.20px;top:88.83px;font:normal 9.9px/12px 'Liberation Sans',sans-serif;color:#222;text-align:right;transform:scaleX(1.035);transform-origin:100% 0">101.280,00</div><div class="a" style="right:4.90px;top:88.83px;font:normal 9.9px/12px 'Liberation Sans',sans-serif;color:#222;text-align:right;transform:scaleX(1.035);transform-origin:100% 0">222.060</div><div style="position:absolute;left:0;top:105px;width:358px;height:21px;background:#fff"></div><div class="a" style="left:4.60px;top:109.83px;font:normal 9.9px/12px 'Liberation Sans',sans-serif;color:#222;transform:scaleX(1.113);transform-origin:0 0">20/11/2025</div><div class="a" style="right:233.60px;top:109.83px;font:normal 9.9px/12px 'Liberation Sans',sans-serif;color:#222;text-align:right;transform:scaleX(1.035);transform-origin:100% 0">101.500,00</div><div class="a" style="right:176.00px;top:109.83px;font:normal 9.9px/12px 'Liberation Sans',sans-serif;color:#222;text-align:right;transform:scaleX(1.035);transform-origin:100% 0">102.450,00</div><div class="a" style="right:119.00px;top:109.83px;font:normal 9.9px/12px 'Liberation Sans',sans-serif;color:#222;text-align:right;transform:scaleX(1.035);transform-origin:100% 0">101.500,00</div><div class="a" style="right:62.20px;top:109.83px;font:normal 9.9px/12px 'Liberation Sans',sans-serif;color:#222;text-align:right;transform:scaleX(1.035);transform-origin:100% 0">101.600,00</div><div class="a" style="right:4.90px;top:109.83px;font:normal 9.9px/12px 'Liberation Sans',sans-serif;color:#222;text-align:right;transform:scaleX(1.035);transform-origin:100% 0">1.819.149</div><div style="position:absolute;left:0;top:126px;width:358px;height:21px;background:#f5f5f5"></div><div class="a" style="left:4.60px;top:130.83px;font:normal 9.9px/12px 'Liberation Sans',sans-serif;color:#222;transform:scaleX(1.113);transform-origin:0 0">19/11/2025</div><div class="a" style="right:233.60px;top:130.83px;font:normal 9.9px/12px 'Liberation Sans',sans-serif;color:#222;text-align:right;transform:scaleX(1.035);transform-origin:100% 0">101.150,00</div><div class="a" style="right:176.00px;top:130.83px;font:normal 9.9px/12px 'Liberation Sans',sans-serif;color:#222;text-align:right;transform:scaleX(1.035);transform-origin:100% 0">101.690,00</div><div class="a" style="right:119.00px;top:130.83px;font:normal 9.9px/12px 'Liberation Sans',sans-serif;color:#222;text-align:right;transform:scaleX(1.035);transform-origin:100% 0">100.510,00</div><div class="a" style="right:62.20px;top:130.83px;font:normal 9.9px/12px 'Liberation Sans',sans-serif;color:#222;text-align:right;transform:scaleX(1.035);transform-origin:100% 0">101.490,00</div><div class="a" style="right:4.90px;top:130.83px;font:normal 9.9px/12px 'Liberation Sans',sans-serif;color:#222;text-align:right;transform:scaleX(1.035);transform-origin:100% 0">4.128.566</div><div style="position:absolute;left:0;top:147px;width:358px;height:21px;background:#fff"></div><div class="a" style="left:4.60px;top:151.83px;font:normal 9.9px/12px 'Liberation Sans',sans-serif;color:#222;transform:scaleX(1.113);transform-origin:0 0">18/11/2025</div><div class="a" style="right:233.60px;top:151.83px;font:normal 9.9px/12px 'Liberation Sans',sans-serif;color:#222;text-align:right;transform:scaleX(1.035);transform-origin:100% 0">102.100,00</div><div class="a" style="right:176.00px;top:151.83px;font:normal 9.9px/12px 'Liberation Sans',sans-serif;color:#222;text-align:right;transform:scaleX(1.035);transform-origin:100% 0">103.110,00</div><div class="a" style="right:119.00px;top:151.83px;font:normal 9.9px/12px 'Liberation Sans',sans-serif;color:#222;text-align:right;transform:scaleX(1.035);transform-origin:100% 0">100.450,00</div><div class="a" style="right:62.20px;top:151.83px;font:normal 9.9px/12px 'Liberation Sans',sans-serif;color:#222;text-align:right;transform:scaleX(1.035);transform-origin:100% 0">100.450,00</div><div class="a" style="right:4.90px;top:151.83px;font:normal 9.9px/12px 'Liberation Sans',sans-serif;color:#222;text-align:right;transform:scaleX(1.035);transform-origin:100% 0">4.981.563</div><div style="position:absolute;left:0;top:168px;width:358px;height:21px;background:#f5f5f5"></div><div class="a" style="left:4.60px;top:172.83px;font:normal 9.9px/12px 'Liberation Sans',sans-serif;color:#222;transform:scaleX(1.113);transform-origin:0 0">17/11/2025</div><div class="a" style="right:233.60px;top:172.83px;font:normal 9.9px/12px 'Liberation Sans',sans-serif;color:#222;text-align:right;transform:scaleX(1.035);transform-origin:100% 0">101.500,00</div><div class="a" style="right:176.00px;top:172.83px;font:normal 9.9px/12px 'Liberation Sans',sans-serif;color:#222;text-align:right;transform:scaleX(1.035);transform-origin:100% 0">102.480,00</div><div class="a" style="right:119.00px;top:172.83px;font:normal 9.9px/12px 'Liberation Sans',sans-serif;color:#222;text-align:right;transform:scaleX(1.035);transform-origin:100% 0">101.100,00</div><div class="a" style="right:62.20px;top:172.83px;font:normal 9.9px/12px 'Liberation Sans',sans-serif;color:#222;text-align:right;transform:scaleX(1.035);transform-origin:100% 0">102.100,00</div><div class="a" style="right:4.90px;top:172.83px;font:normal 9.9px/12px 'Liberation Sans',sans-serif;color:#222;text-align:right;transform:scaleX(1.035);transform-origin:100% 0">8.748.427</div></div>
<div class="a" style="left:1344.46px;top:633.27px;font:normal normal 12.4px/14.26px 'Liberation Sans',sans-serif;color:#173f66;transform:scaleX(0.9441);transform-origin:0 0;">Bajar en formato Excel</div>
<div class="card" style="left:1111px;top:666px;width:358px;height:120px"></div>
<div class="a" style="left:1226.06px;top:683.14px;font:normal bold 14.2px/16.33px 'Liberation Sans',sans-serif;color:#e0a52e;transform:scaleX(0.9357);transform-origin:0 0;">FLUJO DE FONDOS</div>
<div class="a" style="left:1799px;top:575px;width:50px;height:50px;border-radius:50%;background:#808080"></div>
<svg class="a" style="left:1799px;top:575px" width="50" height="50" viewBox="0 0 50 50"><path d="M16.3 30 L25 21.3 L33.7 30" fill="none" stroke="#fff" stroke-width="3"/></svg>
<div class="a" style="left:1799px;top:640px;width:50px;height:50px;border-radius:50%;background:#66d992"></div>
<svg class="a" style="left:1799px;top:640px" width="50" height="50" viewBox="0 0 50 50"><path d="M11.2 38.8 L13.6 31.4 A14.3 14.3 0 1 1 19.3 36.6 Z" fill="none" stroke="#fff" stroke-width="2.6" stroke-linejoin="round"/><path d="M20.5 18.2c.7-.6 1.6-.5 2 .2l1.3 2.6c.3.6.1 1.2-.4 1.7l-.8.7c.9 2 2.6 3.8 4.6 4.7l.7-.8c.5-.5 1.2-.6 1.7-.3l2.5 1.4c.6.4.8 1.2.3 1.9-1 1.3-2.5 1.9-4 1.5-4.2-1.2-7.6-4.7-8.7-8.9-.4-1.5.1-3.3.8-4.7z" fill="#fff"/></svg>
<div id="browser"><div id="urlbar"></div></div>
<div id="hdr"></div>
<div class="a" style="left:0;top:13px;width:1856px;height:64px;z-index:6">
</div>
<svg class="a" style="left:20px;top:38px;z-index:7;" width="20" height="14" viewBox="0 0 20 14"><rect x="1" y="1" width="18" height="2" fill="#1262a6"/><rect x="1" y="6" width="18" height="2" fill="#1262a6"/><rect x="1" y="11" width="18" height="2" fill="#1262a6"/></svg>
<div class="a" style="left:892px;top:19.2px;font:bold 41.5px/48px 'Liberation Sans',sans-serif;color:#0a5b93;-webkit-text-stroke:1.7px #0a5b93;transform:matrix(0.825,0,-0.155,1,0,0);transform-origin:0 100%;letter-spacing:-0.05px;z-index:7;">Rava</div>
<svg class="a" style="left:1500px;top:28px;z-index:7;" width="90" height="34" viewBox="1500 28 90 34"><circle cx="1516.3" cy="42.6" r="5.6" fill="none" stroke="#1a64a3" stroke-width="1.9"/><path d="M1520.6 46.9 L1526.2 52.5" stroke="#1a64a3" stroke-width="2.2" stroke-linecap="round"/><path d="M1567.4 50.8 V42.6 C1567.4 39.6 1569.8 37.6 1572.75 37.6 C1575.7 37.6 1578.1 39.6 1578.1 42.6 V50.8" fill="none" stroke="#1a64a3" stroke-width="1.9"/><path d="M1564.6 52 L1566 50.1 H1579.7 L1581.1 52 Z" fill="#1a64a3"/><rect x="1571.8" y="35.2" width="1.9" height="3" rx="0.9" fill="#1a64a3"/><path d="M1570.8 53 H1574.7 L1572.75 55 Z" fill="#1a64a3"/></svg>
<div class="a" style="left:1614px;top:26px;width:115px;height:38px;background:#1c66a6;border-radius:3px;z-index:7;"></div>
<div class="a" style="left:1625.50px;top:37.02px;font:normal normal 15px/17.25px 'Liberation Sans',sans-serif;color:#fff;transform:scaleX(0.9906);transform-origin:0 0;z-index:8;">Abrí tu cuenta</div>
<div class="a" style="left:1749px;top:26px;width:100px;height:38px;background:#fff;border:1px solid #d5d9dd;border-radius:3px;z-index:7;"></div>
<svg class="a" style="left:1763px;top:36px;z-index:8" width="20" height="18" viewBox="0 0 20 18"><circle cx="9.7" cy="4.4" r="4.1" fill="#1a64a3"/><path d="M1.2 17.1c0-3.6 4.3-5.6 8.5-5.6s8.5 2 8.5 5.6z" fill="#1a64a3"/></svg>
<div class="a" style="left:1788.64px;top:37.02px;font:normal normal 15px/17.25px 'Liberation Sans',sans-serif;color:#1a64a3;transform:scaleX(0.9887);transform-origin:0 0;z-index:8;">Ingresá</div>
<div class="a" style="left:0;top:709px;width:1856px;height:247px;background:#fff">
<div class="a" style="left:0;top:0;width:1856px;height:1px;background:#e0e0e6"></div>
<div class="a" style="left:0;top:1px;width:1856px;height:29px;background:#f9f9fb;border-bottom:1px solid #e0e0e6"></div>
<div class="a" style="left:0;top:30px;width:1856px;height:29px;background:#fff;border-bottom:1px solid #e0e0e6"></div>
<div class="a" style="left:0;top:59px;width:1856px;height:25px;background:#f9f9fb;border-bottom:1px solid #e0e0e6"></div>
<div class="a" style="left:0;top:226px;width:1856px;height:21px;background:#f9f9fb;border-top:1px solid #e0e0e6"></div>
</div>
<svg class="a" style="left:7px;top:716px" width="18" height="16" viewBox="0 0 18 16" fill="none" stroke="#15141a" stroke-width="1.4"><path d="M7 13.5H3.5a2 2 0 0 1-2-2v-8a2 2 0 0 1 2-2h10a2 2 0 0 1 2 2V7"/><path d="M9 7.5l6.5 2.5-2.8 1 2.3 2.5-1.2 1.1-2.3-2.5-1 2.8z" fill="#15141a" stroke="none"/></svg>
<div class="a" style="left:32px;top:714px;width:1px;height:20px;background:#d8d8de"></div>
<svg class="a" style="left:40px;top:715px" width="18" height="18" viewBox="0 0 18 18" fill="none" stroke="#15141a" stroke-width="1.4"><rect x="3.5" y="3.5" width="11" height="11" rx="2.5"/><path d="M9 1v2.5M9 14.5V17M1 9h2.5M14.5 9H17"/></svg>
<div class="a" style="left:62.55px;top:718.79px;font:normal normal 11.5px/13.22px 'Liberation Sans',sans-serif;color:#15141a;transform:scaleX(1.0472);transform-origin:0 0;">Inspector</div>
<svg class="a" style="left:127px;top:716px" width="18" height="17" viewBox="0 0 18 17" fill="none" stroke="#15141a" stroke-width="1.4"><rect x="1.5" y="1.5" width="15" height="14" rx="2"/><path d="M5.5 5.5l3 3-3 3"/></svg>
<div class="a" style="left:149.97px;top:718.79px;font:normal normal 11.5px/13.22px 'Liberation Sans',sans-serif;color:#15141a;transform:scaleX(1.0048);transform-origin:0 0;">Consola</div>
<svg class="a" style="left:208px;top:717px" width="18" height="14" viewBox="0 0 18 14" fill="none" stroke="#15141a" stroke-width="1.4"><path d="M1.5 1.5h11l4 5.5-4 5.5h-11z" stroke-linejoin="round"/></svg>
<div class="a" style="left:230.17px;top:718.79px;font:normal normal 11.5px/13.22px 'Liberation Sans',sans-serif;color:#15141a;transform:scaleX(1.0573);transform-origin:0 0;">Depurador</div>
<div class="a" style="left:296px;top:710px;width:58px;height:2px;background:#0061e0"></div>
<svg class="a" style="left:303px;top:716px" width="18" height="17" viewBox="0 0 18 17" fill="none" stroke="#0061e0" stroke-width="1.8"><path d="M5 15.5V2M1.5 5.5L5 2l3.5 3.5M13 2v13.5M9.5 12l3.5 3.5 3.5-3.5"/></svg>
<div class="a" style="left:325.65px;top:718.79px;font:normal normal 11.5px/13.22px 'Liberation Sans',sans-serif;color:#0061e0;transform:scaleX(0.9692);transform-origin:0 0;">Red</div>
<svg class="a" style="left:361px;top:716px" width="18" height="17" viewBox="0 0 18 17" fill="none" stroke="#15141a" stroke-width="1.4"><path d="M6.3 1.8H5.6a1.6 1.6 0 0 0-1.6 1.6v3.2c0 1-.8 1.9-1.9 1.9 1.1 0 1.9.9 1.9 1.9v3.2a1.6 1.6 0 0 0 1.6 1.6h.7M11.7 1.8h.7a1.6 1.6 0 0 1 1.6 1.6v3.2c0 1 .8 1.9 1.9 1.9-1.1 0-1.9.9-1.9 1.9v3.2a1.6 1.6 0 0 1-1.6 1.6h-.7" stroke-width="1.7"/></svg>
<div class="a" style="left:382.99px;top:718.79px;font:normal normal 11.5px/13.22px 'Liberation Sans',sans-serif;color:#15141a;transform:scaleX(1.0456);transform-origin:0 0;">Editor de estilos</div>
<svg class="a" style="left:483px;top:716px" width="18" height="17" viewBox="0 0 18 17" fill="none" stroke="#15141a" stroke-width="1.4"><path d="M3 14.5a7 7 0 1 1 12 0"/><path d="M9 9l-2 4" /><circle cx="6.8" cy="13.3" r="1.6" fill="#15141a"/></svg>
<div class="a" style="left:505.68px;top:718.79px;font:normal normal 11.5px/13.22px 'Liberation Sans',sans-serif;color:#15141a;transform:scaleX(1.0566);transform-origin:0 0;">Rendimiento</div>
<svg class="a" style="left:589px;top:716px" width="18" height="17" viewBox="0 0 18 17" fill="none" stroke="#15141a" stroke-width="1.4"><rect x="4.5" y="1.5" width="9" height="14" rx="2"/><path d="M1.5 4.5h3M1.5 8.5h3M1.5 12.5h3M13.5 4.5h3M13.5 8.5h3M13.5 12.5h3"/></svg>
<div class="a" style="left:611.26px;top:718.79px;font:normal normal 11.5px/13.22px 'Liberation Sans',sans-serif;color:#15141a;transform:scaleX(1.0735);transform-origin:0 0;">Memoria</div>
<svg class="a" style="left:675px;top:716px" width="16" height="17" viewBox="0 0 16 17" fill="none" stroke="#15141a" stroke-width="1.4"><rect x="1.5" y="1.5" width="13" height="14" rx="2"/><path d="M4.5 6h7M4.5 9.5h7"/></svg>
<div class="a" style="left:697.40px;top:718.79px;font:normal normal 11.5px/13.22px 'Liberation Sans',sans-serif;color:#15141a;transform:scaleX(1.0432);transform-origin:0 0;">Almacenamiento</div>
<svg class="a" style="left:802px;top:715px" width="16" height="18" viewBox="0 0 16 18" fill="none" stroke="#15141a" stroke-width="1.4"><circle cx="8" cy="2.6" r="2" fill="#15141a" stroke="none"/><path d="M1.5 5.6h13v2.2h-4v3.6l.9 6.3H9.2L8.6 13h-1.2l-.6 4.7H4.6l.9-6.3V7.8h-4z" fill="#15141a" stroke="none"/></svg>
<div class="a" style="left:824.60px;top:718.79px;font:normal normal 11.5px/13.22px 'Liberation Sans',sans-serif;color:#15141a;transform:scaleX(1.0350);transform-origin:0 0;">Accesibilidad</div>
<svg class="a" style="left:910px;top:716px" width="16" height="16" viewBox="0 0 16 16" fill="none" stroke="#15141a" stroke-width="1.4"><circle cx="2.5" cy="2.5" r="1.8" stroke-width="1.1"/><circle cx="2.5" cy="7.8" r="1.8" stroke-width="1.1"/><circle cx="2.5" cy="13.1" r="1.8" stroke-width="1.1"/><circle cx="7.8" cy="2.5" r="1.8" stroke-width="1.1"/><circle cx="7.8" cy="7.8" r="1.8" stroke-width="1.1"/><circle cx="7.8" cy="13.1" r="1.8" stroke-width="1.1"/><circle cx="13.1" cy="2.5" r="1.8" stroke-width="1.1"/><circle cx="13.1" cy="7.8" r="1.8" stroke-width="1.1"/><circle cx="13.1" cy="13.1" r="1.8" stroke-width="1.1"/></svg>
<div class="a" style="left:931.70px;top:718.79px;font:normal normal 11.5px/13.22px 'Liberation Sans',sans-serif;color:#15141a;transform:scaleX(1.0460);transform-origin:0 0;">Aplicación</div>
<svg class="a" style="left:1758px;top:716px" width="18" height="16" viewBox="0 0 18 16" fill="none" stroke="#15141a" stroke-width="1.4"><rect x="1.5" y="1.5" width="15" height="13" rx="2.5"/><path d="M1.5 5.5h15M6 5.5v9"/></svg>
<div class="a" style="left:1785px;top:714px;width:1px;height:20px;background:#d8d8de"></div>
<svg class="a" style="left:1795px;top:715px" width="17" height="18" viewBox="0 0 17 18" fill="none" stroke="#15141a" stroke-width="1.4"><rect x="4.5" y="1.5" width="11" height="15" rx="2"/><path d="M4.5 7H3a1.5 1.5 0 0 0-1.5 1.5v6.5a1.5 1.5 0 0 0 1.5 1.5h1.5"/></svg>
<svg class="a" style="left:1821px;top:720px" width="18" height="8" viewBox="0 0 18 8" fill="none" stroke="#15141a" stroke-width="1.4"><circle cx="2.5" cy="4" r="1.5" fill="#15141a"/><circle cx="9" cy="4" r="1.5" fill="#15141a"/><circle cx="15.5" cy="4" r="1.5" fill="#15141a"/></svg>
<svg class="a" style="left:1849px;top:717px" width="14" height="14" viewBox="0 0 14 14" fill="none" stroke="#15141a" stroke-width="1.4"><path d="M1.5 1.5l11 11M12.5 1.5l-11 11"/></svg>
<svg class="a" style="left:9px;top:745px" width="15" height="18" viewBox="0 0 15 18" fill="none" stroke="#15141a" stroke-width="1.4"><path d="M1 4h13M5.5 4V2h4v2M2.5 4l1 12.5h8l1-12.5M6 7v7M9 7v7"/></svg>
<div class="a" style="left:32px;top:743px;width:1px;height:21px;background:#d8d8de"></div>
<svg class="a" style="left:42px;top:746px" width="12" height="12" viewBox="0 0 12 12" fill="none" stroke="#15141a" stroke-width="1.4"><path d="M1 1.5h10L7 6.5v4L5 11.5V6.5z" stroke="#6e6e73" stroke-width="1.1"/></svg>
<div class="a" style="left:56.30px;top:747.49px;font:normal normal 11.5px/13.22px 'Liberation Sans',sans-serif;color:#6e6e73;transform:scaleX(0.9135);transform-origin:0 0;">Filtrar las URL</div>
<div class="a" style="left:1087px;top:743px;width:1px;height:21px;background:#d8d8de"></div>
<svg class="a" style="left:1097px;top:746px" width="12" height="14" viewBox="0 0 12 14" fill="none" stroke="#15141a" stroke-width="1.4"><path d="M2 2.2v9.6M9 2.2v9.6" stroke-width="1.15"/></svg>
<svg class="a" style="left:1123px;top:746px" width="15" height="15" viewBox="0 0 15 15" fill="none" stroke="#15141a" stroke-width="1.4"><path d="M7.5 1.5v12M1.5 7.5h12" stroke-width="1.7"/></svg>
<svg class="a" style="left:1151px;top:745px" width="15" height="16" viewBox="0 0 15 16" fill="none" stroke="#15141a" stroke-width="1.4"><circle cx="6.3" cy="6.3" r="4.6" stroke-width="1.7"/><path d="M9.8 9.8l4 4" stroke-width="1.9"/></svg>
<svg class="a" style="left:1179px;top:745px" width="16" height="16" viewBox="0 0 16 16" fill="none" stroke="#15141a" stroke-width="1.4"><circle cx="8" cy="8.5" r="5.6" stroke-width="1.9"/><path d="M4 4.5l8 8" stroke-width="1.9"/></svg>
<div class="a" style="left:1202px;top:743px;width:1px;height:21px;background:#d8d8de"></div>
<div class="a" style="left:1217.97px;top:747.49px;font:normal normal 11.5px/13.22px 'Liberation Sans',sans-serif;color:#15141a;transform:scaleX(0.9394);transform-origin:0 0;">Todos</div>
<div class="a" style="left:1259.98px;top:747.49px;font:normal normal 11.5px/13.22px 'Liberation Sans',sans-serif;color:#15141a;transform:scaleX(0.9400);transform-origin:0 0;">HTML</div>
<div class="a" style="left:1302.49px;top:747.49px;font:normal normal 11.5px/13.22px 'Liberation Sans',sans-serif;color:#15141a;transform:scaleX(0.8178);transform-origin:0 0;">CSS</div>
<div class="a" style="left:1335.20px;top:747.49px;font:normal normal 11.5px/13.22px 'Liberation Sans',sans-serif;color:#15141a;transform:scaleX(0.7921);transform-origin:0 0;">JS</div>
<div class="a" style="left:1359.38px;top:747.49px;font:normal normal 11.5px/13.22px 'Liberation Sans',sans-serif;color:#15141a;transform:scaleX(0.8851);transform-origin:0 0;">XHR</div>
<div class="a" style="left:1394.46px;top:747.49px;font:normal normal 11.5px/13.22px 'Liberation Sans',sans-serif;color:#15141a;transform:scaleX(0.9487);transform-origin:0 0;">Tipografía</div>
<div class="a" style="left:1456.45px;top:747.49px;font:normal normal 11.5px/13.22px 'Liberation Sans',sans-serif;color:#15141a;transform:scaleX(0.9547);transform-origin:0 0;">Imágenes</div>
<div class="a" style="left:1512px;top:742px;width:48px;height:21px;background:#e5effc;border-radius:2px 2px 0 0;border-bottom:2px solid #0061e0"></div>
<div class="a" style="left:1517.63px;top:747.49px;font:normal normal 11.5px/13.22px 'Liberation Sans',sans-serif;color:#0061e0;transform:scaleX(0.9895);transform-origin:0 0;">Medios</div>
<div class="a" style="left:1568.10px;top:747.49px;font:normal normal 11.5px/13.22px 'Liberation Sans',sans-serif;color:#15141a;transform:scaleX(0.9000);transform-origin:0 0;">WS</div>
<div class="a" style="left:1598.01px;top:747.49px;font:normal normal 11.5px/13.22px 'Liberation Sans',sans-serif;color:#15141a;transform:scaleX(0.9835);transform-origin:0 0;">Otros</div>
<div class="a" style="left:1640px;top:743px;width:1px;height:21px;background:#d8d8de"></div>
<div class="a" style="left:1648px;top:745.5px;width:13.5px;height:13.5px;border:1px solid #8f8f9d;border-radius:2px;background:#fff"></div>
<div class="a" style="left:1664.59px;top:747.49px;font:normal normal 11.5px/13.22px 'Liberation Sans',sans-serif;color:#15141a;transform:scaleX(0.9255);transform-origin:0 0;">Desactivar caché</div>
<div class="a" style="left:1754px;top:743px;width:1px;height:21px;background:#d8d8de"></div>
<div class="a" style="left:1758.71px;top:747.49px;font:normal normal 11.5px/13.22px 'Liberation Sans',sans-serif;color:#15141a;transform:scaleX(0.9714);transform-origin:0 0;">Sin limitación</div>
<svg class="a" style="left:1826px;top:746px" width="7" height="12" viewBox="0 0 7 12" fill="none" stroke="#15141a" stroke-width="1.4"><path d="M3.5 0.5L6.5 4.5h-6zM3.5 11.5L0.5 7.5h6z" fill="#15141a" stroke="none"/></svg>
<div class="a" style="left:1836px;top:743px;width:1px;height:21px;background:#d8d8de"></div>
<svg class="a" style="left:1842px;top:744px" width="16" height="17" viewBox="0 0 16 17" fill="none" stroke="#15141a" stroke-width="1.4"><circle cx="8.5" cy="8.5" r="3.6" stroke-width="2"/><path d="M8.5 1v3M8.5 13v3M1 8.5h3M13 8.5h3M3.2 3.2l2.1 2.1M11.7 11.7l2.1 2.1M3.2 13.8l2.1-2.1M11.7 5.3l2.1-2.1" stroke-width="2"/></svg>
<div class="a" style="left:4.18px;top:774.49px;font:normal normal 11.5px/13.22px 'Liberation Sans',sans-serif;color:#15141a;transform:scaleX(0.9367);transform-origin:0 0;">Estado</div>
<div class="a" style="left:121.70px;top:774.49px;font:normal normal 11.5px/13.22px 'Liberation Sans',sans-serif;color:#15141a;transform:scaleX(1.0324);transform-origin:0 0;">Método</div>
<div class="a" style="left:237.81px;top:774.49px;font:normal normal 11.5px/13.22px 'Liberation Sans',sans-serif;color:#15141a;transform:scaleX(1.0184);transform-origin:0 0;">Dominio</div>
<div class="a" style="left:471.00px;top:774.49px;font:normal normal 11.5px/13.22px 'Liberation Sans',sans-serif;color:#15141a;transform:scaleX(0.9769);transform-origin:0 0;">Archivo</div>
<div class="a" style="left:1051.50px;top:774.49px;font:normal normal 11.5px/13.22px 'Liberation Sans',sans-serif;color:#15141a;">Iniciador</div>
<div class="a" style="left:1284.75px;top:774.49px;font:normal normal 11.5px/13.22px 'Liberation Sans',sans-serif;color:#15141a;transform:scaleX(1.0083);transform-origin:0 0;">Tipo</div>
<div class="a" style="left:1401.16px;top:774.49px;font:normal normal 11.5px/13.22px 'Liberation Sans',sans-serif;color:#15141a;transform:scaleX(0.9456);transform-origin:0 0;">Transferido</div>
<div class="a" style="left:1634.17px;top:774.49px;font:normal normal 11.5px/13.22px 'Liberation Sans',sans-serif;color:#15141a;transform:scaleX(0.9246);transform-origin:0 0;">Tamaño</div>
<div class="a" style="left:116px;top:768px;width:1px;height:24px;background:#e0e0e6"></div>
<div class="a" style="left:233px;top:768px;width:1px;height:24px;background:#e0e0e6"></div>
<div class="a" style="left:465px;top:768px;width:1px;height:24px;background:#e0e0e6"></div>
<div class="a" style="left:1047px;top:768px;width:1px;height:24px;background:#e0e0e6"></div>
<div class="a" style="left:1279px;top:768px;width:1px;height:24px;background:#e0e0e6"></div>
<div class="a" style="left:1395px;top:768px;width:1px;height:24px;background:#e0e0e6"></div>
<div class="a" style="left:1628px;top:768px;width:1px;height:24px;background:#e0e0e6"></div>
<div class="a" style="left:1744px;top:768px;width:1px;height:24px;background:#e0e0e6"></div>
<div class="a" style="left:1749.05px;top:775.39px;font:normal normal 10.5px/12.07px 'Liberation Sans',sans-serif;color:#15141a;transform:scaleX(0.9409);transform-origin:0 0;">0 ms</div>
<div class="a" style="left:1833.5px;top:774.43px;font:normal 10.5px/14px 'Liberation Sans',sans-serif;color:#15141a;letter-spacing:-0.3px">5,12 s</div>
<div class="a" style="left:1759px;top:768px;width:1px;height:24px;background:#4a90e8"></div>
<div class="a" style="left:1765px;top:768px;width:1px;height:24px;background:#e0e0e6"></div>
<div class="a" style="left:1786px;top:768px;width:1px;height:24px;background:#e455c8"></div>
<div class="a" style="left:1808px;top:768px;width:1px;height:24px;background:#e0e0e6"></div>
<div class="a" style="left:1828px;top:774px;width:1px;height:14px;border-left:1px dotted #555"></div>
<svg class="a" style="left:9px;top:939px" width="16" height="17" viewBox="0 0 16 17" fill="none" stroke="#15141a" stroke-width="1.4"><circle cx="8" cy="10" r="6" stroke-width="1.6"/><path d="M5.5 1.5h5M8 1.5v2.5M8 10l2.5-2.5" stroke-width="1.6"/></svg>
<div class="a" style="left:38.36px;top:941.89px;font:normal normal 11.5px/13.22px 'Liberation Sans',sans-serif;color:#15141a;transform:scaleX(0.9596);transform-origin:0 0;">No hay solicitudes</div>
<div class="a" style="left:138px;top:941px;width:14px;height:13.5px;background:#3a8ee8;border:1px solid #15141a"></div>
<div class="a" style="left:155.27px;top:941.89px;font:normal normal 11.5px/13.22px 'Liberation Sans',sans-serif;color:#15141a;transform:scaleX(0.9489);transform-origin:0 0;">DOMContentLoaded: 930 ms</div>
<div class="a" style="left:307px;top:941px;width:13.5px;height:13.5px;background:#e03cbf;border:1px solid #15141a"></div>
<div class="a" style="left:324.51px;top:941.89px;font:normal normal 11.5px/13.22px 'Liberation Sans',sans-serif;color:#15141a;transform:scaleX(0.9251);transform-origin:0 0;">load: 2,55 s</div>
</body></html>
